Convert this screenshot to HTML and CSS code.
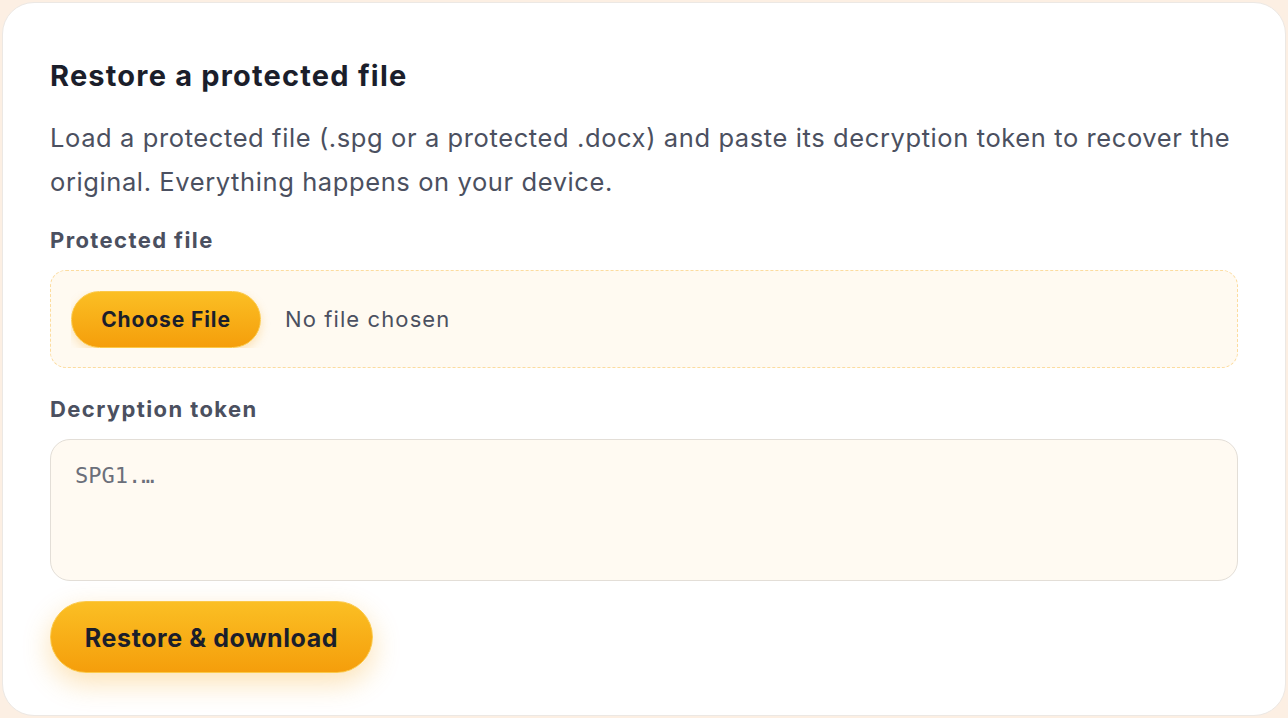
FILE: index.html
```html
<!DOCTYPE html>
<html>
<head>
<title>Restore a protected file</title>
<link rel="stylesheet" href="styles.css">
</head>
<body>
<div class="card">
	<h2>Restore a protected file</h2>
	<p class="lead">Load a protected file (.spg or a protected .docx) and paste its decryption token to recover the original. Everything happens on your device.</p>
	<label class="field-label" for="file">Protected file</label>
	<div class="dropzone">
		<input type="file" id="file">
	</div>
	<label class="field-label" for="token">Decryption token</label>
	<textarea id="token" placeholder="SPG1.…"></textarea>
	<button class="primary">Restore &amp; download</button>
</div>
</body>
</html>
```

FILE: styles.css
```css
html,body{
	margin:0;
	padding:0;
}
body{
	background:#fcefe3;
	padding:2px;
	font-family:"Inter","Noto Sans",sans-serif;
	color:#1b1e2b;
	box-sizing:border-box;
	height:718px;
}
.card{
	background:#fff;
	border:1px solid #ece8e4;
	border-radius:32px;
	padding:48px 47px 42px 47px;
	display:flex;
	flex-direction:column;
	align-items:flex-start;
	box-sizing:border-box;
	height:714px;
}
h2{
	margin:0;
	font-size:29px;
	font-weight:700;
	line-height:50px;
	letter-spacing:1.2px;
}
p.lead{
	margin:15px 0 22px 0;
	font-size:25.5px;
	line-height:44px;
	font-weight:400;
	color:#4b5060;
	letter-spacing:0.6px;
}
.field-label{
	font-size:22px;
	font-weight:700;
	color:#4b5060;
	line-height:28px;
	letter-spacing:1.4px;
	margin-bottom:16px;
}
.dropzone{
	align-self:stretch;
	box-sizing:border-box;
	height:98px;
	border:1.5px dashed #fcdc9f;
	background:#fffaf1;
	border-radius:16px;
	padding:2px 20px 0 20px;
	display:flex;
	align-items:center;
	margin-bottom:27px;
}
.dropzone input{
	font-family:inherit;
	font-size:22px;
	letter-spacing:1.1px;
	color:#4b5060;
}
.dropzone input::file-selector-button{
	font-family:inherit;
	font-size:21px;
	font-weight:700;
	letter-spacing:0.9px;
	color:#1b1e2b;
	height:57px;
	width:190px;
	border:1px solid #fbc94a;
	border-radius:29px;
	background:linear-gradient(#fbbf24,#f59e0b);
	box-shadow:0 4px 10px rgba(245,158,11,0.25);
	margin-right:24px;
}
textarea{
	align-self:stretch;
	box-sizing:border-box;
	height:143px;
	border:1.5px solid #e3ded7;
	background:#fffaf2;
	border-radius:20px;
	padding:23px 24px;
	font-family:"DejaVu Sans Mono","Liberation Mono",monospace;
	font-size:22px;
	resize:none;
	margin:0 0 20px 0;
}
textarea::placeholder{
	color:#6b6f7a;
}
button.primary{
	font-family:inherit;
	width:323px;
	height:72px;
	flex-shrink:0;
	padding-top:3px;
	border:1px solid #fbc94a;
	border-radius:36px;
	background:linear-gradient(#fbbf24,#f59e0b);
	box-shadow:0 10px 28px rgba(245,158,11,0.3);
	font-size:25px;
	font-weight:700;
	color:#1b1e2b;
	letter-spacing:0.6px;
}
```
